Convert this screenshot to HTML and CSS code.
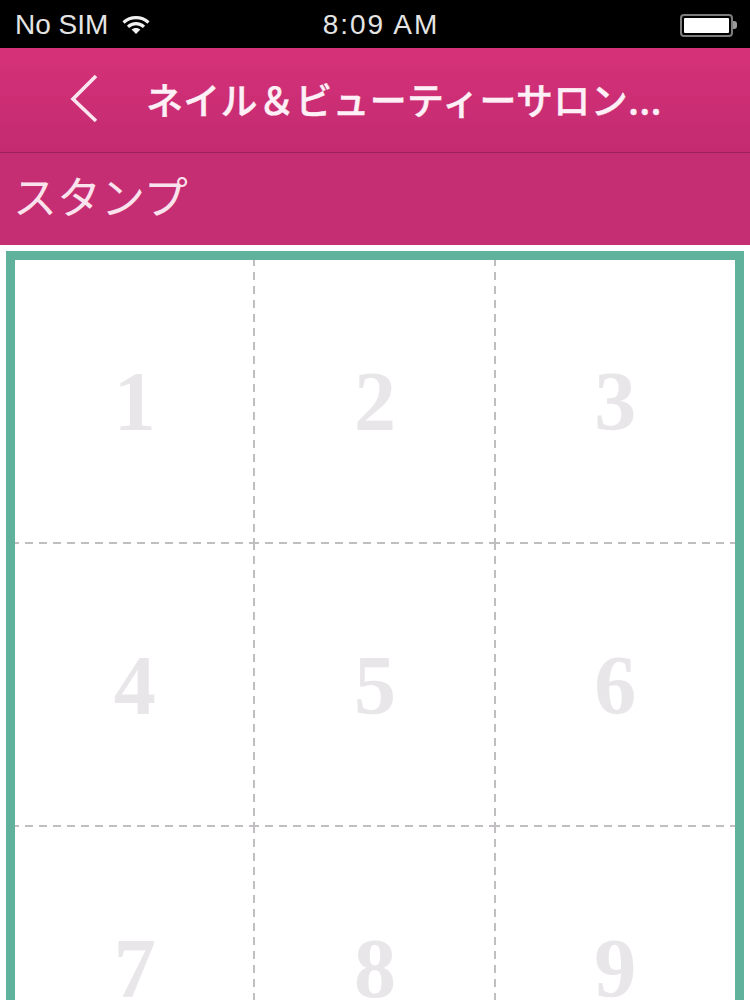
FILE: index.html
```html
<!DOCTYPE html>
<html lang="ja">

<head>
    <meta charset="UTF-8">
    <meta name="viewport" content="width=device-width, initial-scale=1.0">
    <title>スタンプ</title>
    <link rel="stylesheet" href="styles.css">
</head>

<body>
    <div class="screen">
        <div class="status">
            <div class="status-left">
                <span>No SIM</span>
                <svg class="wifi" width="28" height="18" viewBox="0 0 28 18">
                    <path d="M1.5 6.5C8.5 0 19.5 0 26.5 6.5" />
                    <path d="M6 10.8C10.5 6.6 17.5 6.6 22 10.8" />
                    <path class="wifi-dot" d="M14 18L9.6 13.6C12 11.4 16 11.4 18.4 13.6Z" />
                </svg>
            </div>
            <div class="time">8:09 AM</div>
            <div class="status-right">
                <div class="battery"><div class="battery-fill"></div></div>
                <div class="battery-nub"></div>
            </div>
        </div>
        <div class="nav">
            <svg class="back" width="30" height="50" viewBox="0 0 30 50">
                <path d="M26 2L3 25L26 47" />
            </svg>
            <div class="nav-title">ネイル＆ビューティーサロン...</div>
        </div>
        <div class="subhead">スタンプ</div>
        <div class="card">
            <div class="stamps">
                <div class="stamp">1</div>
                <div class="stamp">2</div>
                <div class="stamp">3</div>
                <div class="stamp">4</div>
                <div class="stamp">5</div>
                <div class="stamp">6</div>
                <div class="stamp">7</div>
                <div class="stamp">8</div>
                <div class="stamp">9</div>
            </div>
        </div>
    </div>
</body>

</html>
```

FILE: styles.css
```css
* {
    margin: 0;
    padding: 0;
    box-sizing: border-box;
}

html, body {
    background-color: white;
    overflow: hidden;
}

.screen {
    width: 750px;
    height: 1000px;
    overflow: hidden;
}

/* status bar */
.status {
    display: grid;
    grid-template-columns: 1fr auto 1fr;
    align-items: center;
    height: 48px;
    padding: 2px 13px 0 15px;
    background-color: #000;
    color: #e4e4e4;
    font-family: "Liberation Sans", Arial, sans-serif;
    font-size: 28px;
}

.status-left {
    display: flex;
    align-items: center;
    gap: 14px;
}

.wifi {
    margin-top: -1px;
}

.wifi path {
    fill: none;
    stroke: #f0f0f0;
    stroke-width: 3.2;
}

.wifi .wifi-dot {
    fill: #f0f0f0;
    stroke: none;
}

.time {
    margin-left: 10px;
    letter-spacing: 2px;
}

.status-right {
    display: flex;
    align-items: center;
    justify-content: flex-end;
}

.battery {
    width: 53px;
    height: 23px;
    padding: 2px;
    border: 2px solid #7c7c7c;
    border-radius: 4px;
}

.battery-fill {
    height: 100%;
    background-color: white;
    border-radius: 1px;
}

.battery-nub {
    width: 4px;
    height: 8px;
    background-color: #9a9a9a;
    border-radius: 0 3px 3px 0;
}

/* pink headers */
.nav {
    display: flex;
    align-items: center;
    height: 105px;
    padding: 0 0 2px 70px;
    background: linear-gradient(#d53179, #c32b70);
    border-bottom: 1px solid #9c2159;
    color: #fdf0f6;
}

.back {
    flex-shrink: 0;
}

.back path {
    fill: none;
    stroke: #fbe6ef;
    stroke-width: 3.6;
}

.nav-title {
    margin-left: 46px;
    font-family: "Noto Sans CJK JP", "Liberation Sans", sans-serif;
    font-size: 37px;
    font-weight: 500;
    letter-spacing: 0.3px;
    -webkit-text-stroke: 0.4px #fdf0f6;
    white-space: nowrap;
}

.subhead {
    height: 92px;
    padding: 13px 0 0 13px;
    background-color: #c62e73;
    color: #fbe3ee;
    font-family: "Noto Sans CJK JP", "Liberation Sans", sans-serif;
    font-size: 44px;
    font-weight: 400;
    line-height: 58px;
}

/* stamp card */
.card {
    margin: 6px 6px 0 6px;
    height: 800px;
    border: 9.5px solid #60b29c;
    background-color: white;
}

.stamps {
    display: grid;
    grid-template-columns: 239.5px 241px 1fr;
    grid-auto-rows: 283.5px;
}

.stamp {
    display: flex;
    align-items: center;
    justify-content: center;
    color: #e8e6e9;
    font-family: "Liberation Serif", "Times New Roman", serif;
    font-size: 84px;
    font-weight: bold;
    background-image:
        repeating-linear-gradient(to bottom, #c0bec1 0 6px, transparent 6px 12px, #c0bec1 12px 14px),
        repeating-linear-gradient(to right, #c0bec1 0 4px, transparent 4px 10px, #c0bec1 10px 14px);
    background-repeat: no-repeat;
    background-size: 2px 100%, 100% 2px;
    background-position: right top, left bottom;
}

.stamp:nth-child(3n) {
    background-size: 0 0, 100% 2px;
}
```
